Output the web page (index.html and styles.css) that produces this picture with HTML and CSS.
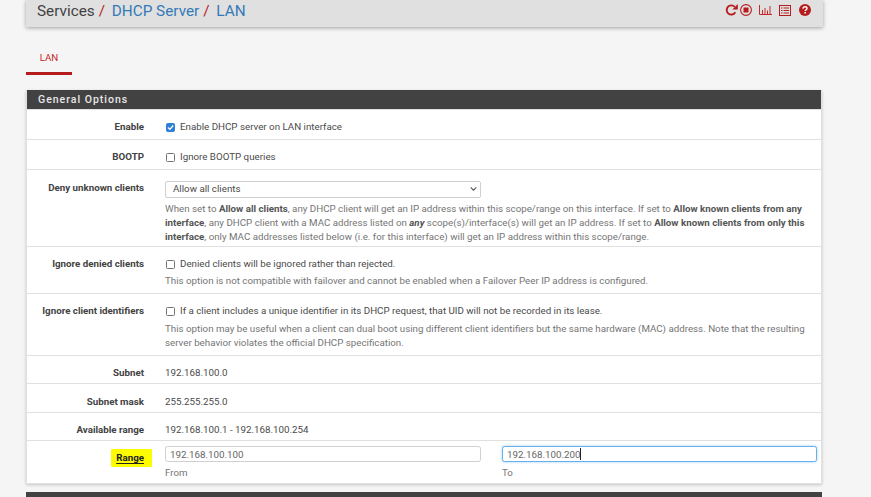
FILE: index.html
```html
<!DOCTYPE html>
<html>
<head>
    <title>Services / DHCP Server / LAN</title>
    <link rel="stylesheet" href="styles.css">
</head>
<body>
    <header class="topbar">
        <div class="crumbs">
            <span class="crumb">Services</span><span class="sep">/</span>
            <a class="crumb link">DHCP Server</a><span class="sep">/</span>
            <a class="crumb link">LAN</a>
        </div>
        <div class="actions">
            <svg class="ico" viewBox="0 0 13 12" width="13" height="12"><path d="M10.300 8.300A4.600 4.600 0 1 1 9.700 2.900" fill="none" stroke="#b71c1c" stroke-width="1.900"/><path d="M12.800 0V5.400H7.400z" fill="#b71c1c"/></svg>
            <svg class="ico" viewBox="0 0 12 12" width="12" height="12"><circle cx="6" cy="6" r="5.400" fill="none" stroke="#b71c1c" stroke-width="1.100"/><rect x="3.500" y="3.500" width="5" height="5" rx=".5" fill="#b71c1c"/></svg>
            <svg class="ico ico-chart" viewBox="0 0 13 10" width="13" height="10"><path d="M.5 0V9.500H13" fill="none" stroke="#c62828"/><path d="M3 5h1v4H3zM5.500 3h1v6h-1zM8 5.500h1V9H8zM10.500 1h1v8h-1z" fill="#c62828"/></svg>
            <svg class="ico ico-list" viewBox="0 0 12 11" width="12" height="11"><rect x=".5" y=".5" width="11" height="10" fill="none" stroke="#b71c1c"/><path d="M2 2.500h1.500v1H2zM4.500 2.500H10v1H4.500zM2 5h1.500v1H2zM4.500 5H10v1H4.500zM2 7.500h1.500v1H2zM4.500 7.500H10v1H4.500z" fill="#b71c1c"/></svg>
            <svg class="ico ico-help" viewBox="0 0 12 12" width="12" height="12"><circle cx="6" cy="6" r="6" fill="#b71c1c"/><path d="M4 4.700C4 3.400 4.900 2.800 6 2.800S8 3.500 8 4.500C8 5.800 6.200 5.800 6.200 7" fill="none" stroke="#fff" stroke-width="1.400"/><rect x="5.400" y="8" width="1.600" height="1.500" fill="#fff"/></svg>
        </div>
    </header>

    <nav class="tabs">
        <a class="tab">LAN</a>
    </nav>

    <section class="panel">
        <h2 class="panel-title">General Options</h2>

        <div class="row row-enable">
            <div class="label">Enable</div>
            <div class="field">
                <label class="check"><span class="box on"><svg viewBox="0 0 9 9" width="9" height="9"><path d="M2 4.500L3.900 6.400L7.200 2.500" fill="none" stroke="#fff" stroke-width="1.300"/></svg></span>Enable DHCP server on LAN interface</label>
            </div>
        </div>

        <div class="row row-enable">
            <div class="label">BOOTP</div>
            <div class="field">
                <label class="check"><span class="box"></span>Ignore BOOTP queries</label>
            </div>
        </div>

        <div class="row row-deny">
            <div class="label">Deny unknown clients</div>
            <div class="field">
                <div class="select">Allow all clients<svg viewBox="0 0 8 5" width="7" height="4"><path d="M.5 .5L4 4L7.500 .5" fill="none" stroke="#555" stroke-width="1.300"/></svg></div>
                <p class="help">When set to <b>Allow all clients</b>, any DHCP client will get an IP address within this scope/range on this interface. If set to <b>Allow known clients from any interface</b>, any DHCP client with a MAC address listed on <b><i>any</i></b> scope(s)/interface(s) will get an IP address. If set to <b>Allow known clients from only this interface</b>, only MAC addresses listed below (i.e. for this interface) will get an IP address within this scope/range.</p>
            </div>
        </div>

        <div class="row row-check">
            <div class="label">Ignore denied clients</div>
            <div class="field">
                <label class="check"><span class="box"></span>Denied clients will be ignored rather than rejected.</label>
                <p class="help help-check">This option is not compatible with failover and cannot be enabled when a Failover Peer IP address is configured.</p>
            </div>
        </div>

        <div class="row row-check row-check-long">
            <div class="label">Ignore client identifiers</div>
            <div class="field">
                <label class="check"><span class="box"></span>If a client includes a unique identifier in its DHCP request, that UID will not be recorded in its lease.</label>
                <p class="help help-check">This option may be useful when a client can dual boot using different client identifiers but the same hardware (MAC) address. Note that the resulting server behavior violates the official DHCP specification.</p>
            </div>
        </div>

        <div class="row row-static">
            <div class="label">Subnet</div>
            <div class="field">192.168.100.0</div>
        </div>
        <div class="row row-static row-mask">
            <div class="label">Subnet mask</div>
            <div class="field">255.255.255.0</div>
        </div>
        <div class="row row-static">
            <div class="label">Available range</div>
            <div class="field">192.168.100.1 - 192.168.100.254</div>
        </div>

        <div class="row row-range">
            <div class="label"><span class="marked">Range</span></div>
            <div class="field range">
                <div>
                    <div class="input">192.168.100.100</div>
                    <div class="hint">From</div>
                </div>
                <div>
                    <div class="input focus">192.168.100.200<span class="caret"></span></div>
                    <div class="hint">To</div>
                </div>
            </div>
        </div>
    </section>

    <div class="next-panel"></div>
</body>
</html>
```

FILE: styles.css
```css
body {
    margin: 0;
    height: 497px;
    overflow: hidden;
    background-color: #f5f5f5;
    font-family: Roboto, "Liberation Sans", sans-serif;
    font-size: 9.75px;
    line-height: 14px;
    color: #4a4a4a;
}
.topbar {
    display: flex;
    justify-content: space-between;
    align-items: center;
    width: 797px;
    height: 27px;
    margin-left: 26px;
    padding: 0 12px 7px 11px;
    box-sizing: border-box;
    background-color: #e0e0e0;
    box-shadow: 0 1px 4px rgba(0, 0, 0, .35);
}
.crumbs {
    padding-top: 2px;
    font-size: 15.3px;
    line-height: 20px;
    white-space: nowrap;
}
.crumb {
    color: #424242;
}
.link {
    color: #337ab7;
}
.sep {
    margin: 0 3px 0 4px;
    color: #b71c1c;
}
.actions {
    display: flex;
    align-items: center;
}
.ico {
    display: block;
    margin-left: 2px;
}
.ico-chart,
.ico-list {
    margin-left: 7px;
}
.ico-help {
    margin-left: 8px;
}
.tabs {
    display: flex;
    margin: 20px 0 0 26px;
    height: 28px;
}
.tab {
    width: 46px;
    height: 17px;
    padding: 4px 0;
    text-align: center;
    color: #c62828;
    border-bottom: 3px solid #b71c1c;
}
.panel {
    margin: 15px 0 0 26px;
    width: 796px;
    background-color: #fff;
    border: 1px solid #e0e0e0;
    border-top: 0;
    box-sizing: border-box;
    box-shadow: 0 1px 3px rgba(0, 0, 0, .2);
}
.panel-title {
    margin: 0;
    height: 19px;
    padding-left: 11px;
    background-color: #424242;
    border-bottom: 1px solid #e0e0e0;
    color: #e8e8e8;
    font-size: 10.5px;
    font-weight: 500;
    line-height: 19px;
    letter-spacing: 1px;
}
.row {
    display: grid;
    grid-template-columns: 117px 1fr;
    column-gap: 21px;
    border-bottom: 1px solid #e0e0e0;
    box-sizing: border-box;
}
.row:last-child {
    border-bottom: 0;
}
.label {
    text-align: right;
    font-weight: 700;
    color: #424242;
}
.field {
    padding-right: 14px;
}
.row-enable {
    height: 30px;
    padding-top: 10px;
}
.row-deny {
    height: 77px;
    padding-top: 11px;
}
.row-check {
    height: 47px;
    padding-top: 10px;
}
.row-check-long {
    height: 62px;
}
.row-check-long .help-check {
    margin-top: 4px;
}
.row-static {
    height: 28px;
    padding-top: 10px;
}
.row-mask {
    height: 29px;
    padding-top: 11px;
}
.row-range {
    height: 42px;
    padding-top: 5px;
}
.check {
    display: flex;
    align-items: center;
    white-space: nowrap;
}
.box {
    display: flex;
    align-items: center;
    justify-content: center;
    width: 9px;
    height: 9px;
    margin: 0 5px 0 1px;
    box-sizing: border-box;
    border: 1px solid #757575;
    border-radius: 1.5px;
    background-color: #fff;
}
.box svg {
    flex: none;
}
.box.on {
    background-color: #2f7fd6;
    border-color: #2f7fd6;
}
.select {
    display: flex;
    justify-content: space-between;
    align-items: center;
    width: 316px;
    height: 17px;
    padding: 0 3px 1px 7px;
    box-sizing: border-box;
    background-color: #fff;
    border: 1px solid #d0d0d0;
    border-radius: 2px;
}
.help {
    margin: 4px 0 0;
    color: #757575;
}
.help b {
    color: #555;
}
.help-check {
    margin-top: 3px;
}
.marked {
    display: inline-block;
    margin: 3px -8px 0 0;
    padding: 2px 8px 2px 5px;
    background-color: #fdfd00;
    border-radius: 1px;
    color: #222;
    text-decoration: underline;
    text-underline-offset: 1.5px;
}
.range {
    display: grid;
    grid-template-columns: 316px 315px;
    column-gap: 21px;
}
.input {
    height: 16px;
    padding-left: 4px;
    box-sizing: border-box;
    background-color: #fff;
    border: 1px solid #d0d0d0;
    border-radius: 2.500px;
    line-height: 15px;
    color: #666;
}
.input.focus {
    border-color: #66afe9;
    box-shadow: 0 0 3px rgba(102, 175, 233, .6);
}
.caret {
    display: inline-block;
    width: 1px;
    height: 12px;
    background-color: #222;
    vertical-align: -2px;
}
.hint {
    margin-top: 4px;
    color: #757575;
}
.next-panel {
    margin: 8px 0 0 26px;
    width: 796px;
    height: 10px;
    background-color: #424242;
}
```
